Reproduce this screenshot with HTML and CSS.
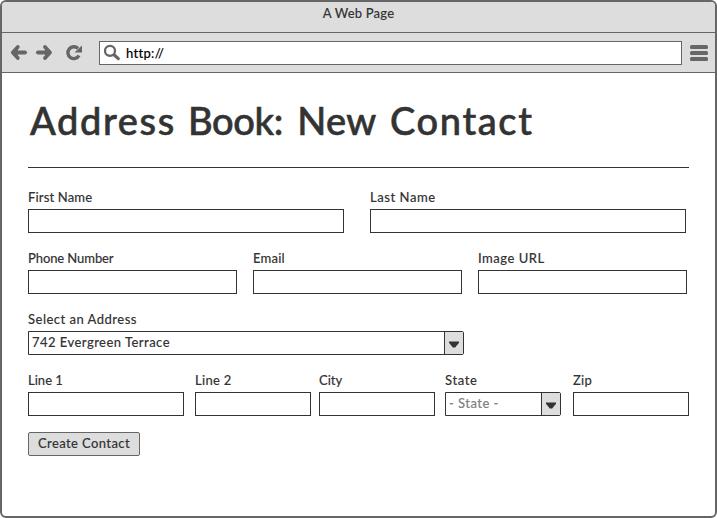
FILE: index.html
```html
<!DOCTYPE html>
<html lang="en">
<head>
<meta charset="utf-8">
<title>A Web Page</title>
<link rel="stylesheet" href="styles.css">
</head>
<body>
<div class="window">
  <header class="titlebar"><span class="t-page">A Web Page</span></header>
  <nav class="toolbar">
    <svg class="nav-icons" width="84" height="24" viewBox="0 0 84 24" fill="none" stroke="#666" stroke-width="4" stroke-linecap="round" stroke-linejoin="round">
      <path d="M12 11.500h11"/>
      <path d="M15.800 6l-5 5.500 5 5.500" fill="#666" stroke-width="3.800"/>
      <path d="M36 11.500h11"/>
      <path d="M43 6l5 5.500-5 5.500" fill="#666" stroke-width="3.800"/>
      <path d="M77 14.500A5.900 5.900 0 1 1 76 7.500" stroke-width="3.400" stroke-linecap="butt"/>
      <path d="M80 4.500v7h-7.500z" fill="#666" stroke="none"/>
    </svg>
    <div class="address">
      <svg width="18" height="18" viewBox="0 0 18 18" fill="none" stroke="#666" stroke-linecap="round"><circle cx="6" cy="6.800" r="5" stroke-width="2.300"/><path d="M10.300 11l4 3.600" stroke-width="3.200"/></svg>
      <span class="t-url">http://</span>
    </div>
    <svg class="menu" width="18" height="18" viewBox="0 0 18 18" fill="#666"><rect y="1" width="18" height="4" rx="1.500"/><rect y="7" width="18" height="4" rx="1.500"/><rect y="13" width="18" height="4" rx="1.500"/></svg>
  </nav>
  <main class="content">
    <h1><span class="wide">Address</span> <span class="tight">Book:</span> <span class="normal">New</span> <span class="wide">Contact</span></h1>
    <form>
      <div class="row names">
        <div class="field"><label class="t-first">First Name</label><div class="box"></div></div>
        <div class="field"><label class="t-last">Last Name</label><div class="box"></div></div>
      </div>
      <div class="row details">
        <div class="field"><label class="t-phone">Phone Number</label><div class="box"></div></div>
        <div class="field"><label class="t-email">Email</label><div class="box"></div></div>
        <div class="field"><label class="t-image">Image URL</label><div class="box"></div></div>
      </div>
      <div class="row saved">
        <div class="field"><label class="t-select">Select an Address</label>
          <div class="box select"><span class="value t-value">742 Evergreen Terrace</span><span class="arrow"><svg width="12" height="7" viewBox="0 0 12 7"><path d="M1 .5h10v1.300L7.200 6.500H4.800L1 1.800z" fill="#333"/></svg></span></div></div>
      </div>
      <div class="row parts">
        <div class="field"><label>Line 1</label><div class="box"></div></div>
        <div class="field"><label class="t-line">Line 2</label><div class="box"></div></div>
        <div class="field"><label>City</label><div class="box"></div></div>
        <div class="field"><label class="t-state">State</label>
          <div class="box select"><span class="value muted t-option">- State -</span><span class="arrow"><svg width="12" height="7" viewBox="0 0 12 7"><path d="M1 .5h10v1.300L7.200 6.500H4.800L1 1.800z" fill="#333"/></svg></span></div></div>
        <div class="field"><label class="t-zip">Zip</label><div class="box"></div></div>
      </div>
      <button type="button"><span class="t-create">Create Contact</span></button>
    </form>
  </main>
</div>
</body>
</html>
```
FILE: styles.css
```css
* { box-sizing: border-box; }
body { margin: 0; background: #fff; color: #333; font: 500 13px/16px Lato, "Liberation Sans", sans-serif; -webkit-text-stroke: 0.1px currentColor; }
.window { width: 717px; height: 518px; border: 2px solid #666; border-radius: 6px; overflow: hidden; }
.titlebar { height: 31px; background: #ddd; border-bottom: 1px solid #666; text-align: center; padding-top: 3px; }
.toolbar { height: 40px; background: #ddd; border-bottom: 1px solid #666; display: flex; align-items: flex-start; padding: 8px 7px 0 0; }
.nav-icons { margin-right: 13px; }
.address { width: 583px; height: 24px; flex: none; border: 1px solid #666; background: #fff; color: #000; display: flex; align-items: center; padding: 0 4px; gap: 4px; }
.menu { margin: 3px 0 0 8px; flex: none; }
.content { padding: 0 26px; }
h1 { margin: 0; height: 95px; padding: 24px 0 0 2px; border-bottom: 1px solid #333; font-size: 38px; line-height: 46px; font-weight: 500; white-space: nowrap; word-spacing: 2.7px; -webkit-text-stroke-width: 0.6px; }
.wide { letter-spacing: 1.6px; }
.tight { letter-spacing: -0.4px; margin-right: 2px; }
.normal { letter-spacing: 0.4px; margin-right: 1px; }
form { padding-top: 22px; }
.row { display: grid; margin-bottom: 18px; }
.names { grid-template-columns: 316px 316px; column-gap: 26px; }
.details { grid-template-columns: repeat(3, 209px); column-gap: 16px; }
.saved { grid-template-columns: 436px; }
.parts { grid-template-columns: 167px 124px 126px 128px 116px; margin-bottom: 16px; }
.parts .box { width: 116px; }
.parts .field:first-child .box { width: 156px; }
.field { min-width: 0; }
label { display: block; height: 19px; line-height: 14px; white-space: nowrap; }
.box { height: 24px; border: 1px solid #333; background: #fff; }
.select { display: flex; border-radius: 0 2px 2px 0; }
.value { flex: 1; padding: 2px 3px; white-space: nowrap; }
.muted { color: #808080; }
.arrow { width: 19px; border-left: 1px solid #333; background: #ddd; display: flex; align-items: center; justify-content: center; padding-top: 2px; }
button { display: block; width: 112px; height: 24px; padding: 0 0 2px; background: #ddd; border: 1px solid #666; border-radius: 2px; color: #333; font: inherit; white-space: nowrap; }
.t-page { letter-spacing: 0.2px; }
.t-url { letter-spacing: 0.3px; }
.t-first { letter-spacing: 0.15px; }
.t-last { letter-spacing: 0.55px; }
.t-phone { letter-spacing: -0.1px; }
.t-email { letter-spacing: 0.2px; }
.t-image { letter-spacing: 0.5px; }
.t-select { letter-spacing: 0.48px; }
.t-value { letter-spacing: 0.46px; }
.t-line { letter-spacing: 0.3px; }
.t-state { letter-spacing: 0.6px; }
.t-option { letter-spacing: 0.45px; }
.t-zip { letter-spacing: 0.3px; }
.t-create { letter-spacing: 0.4px; }
```
